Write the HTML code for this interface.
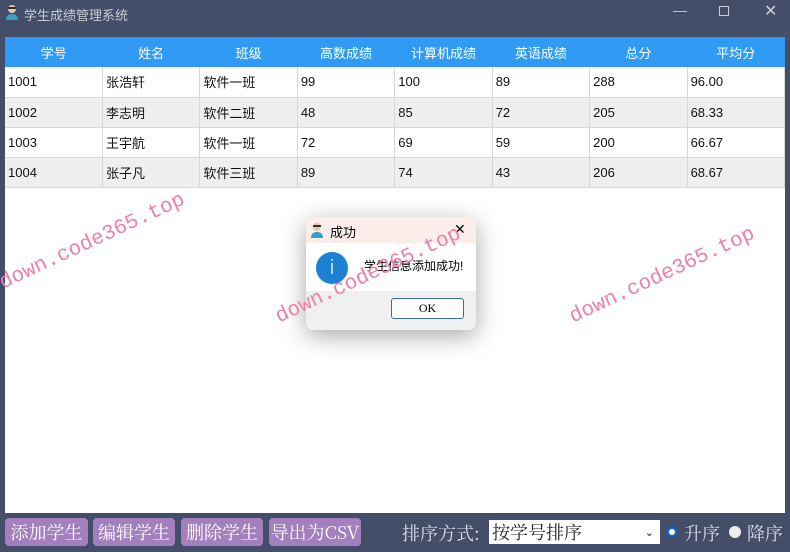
<!DOCTYPE html>
<html><head><meta charset="utf-8"><style>
*{margin:0;padding:0;box-sizing:border-box}
body{width:790px;height:552px;background:#444e68;font-family:"Liberation Sans","Noto Sans CJK SC",sans-serif;position:relative;overflow:hidden}
.title{position:absolute;left:24px;top:5px;color:#c9ccd6;font-size:13px}
.tb{position:absolute;top:2px;color:#c9ccd6;font-size:14px}
.area{position:absolute;left:5px;top:37px;width:780px;height:476px;background:#fff}
table{border-collapse:collapse;width:780px;table-layout:fixed}
th{background:#2f9bf5;color:#fff;font-weight:normal;font-size:13px;height:30px}
td{height:30px;font-size:13px;padding-left:3px;border-right:1px solid #d8d8d8;border-bottom:1px solid #d8d8d8;color:#111}
tr.g td{background:#efefef}
.btn{position:absolute;top:518px;height:28px;background:#a37fbd;color:#fff;border-radius:4px;font-family:"Noto Serif CJK SC",serif;font-size:18px;line-height:28px;text-align:center}
.wm{position:absolute;color:#ee7fa9;font-family:"Liberation Mono",monospace;font-size:21px;transform:rotate(-25deg);transform-origin:left bottom;white-space:nowrap}
.dlg{position:absolute;left:306px;top:217px;width:170px;height:113px;background:#fff;border-radius:7px;box-shadow:0 6px 24px rgba(0,0,0,.35);overflow:hidden}
</style></head><body>
<svg style="position:absolute;left:5px;top:4px" width="14" height="16"><circle cx="7" cy="5" r="4" fill="#e9c9a5"/><path d="M3 4h8" stroke="#333" stroke-width="2"/><path d="M1 16q0-6 6-6t6 6z" fill="#3aa0c8"/></svg>
<div class="title">学生成绩管理系统</div>
<div class="tb" style="left:673px">—</div>
<div class="tb" style="left:719px;top:6px;width:10px;height:10px;border:1px solid #c9ccd6"></div>
<div class="tb" style="left:764px;font-size:16px;top:1px">✕</div>
<div class="area">
<table>
<tr><th>学号</th><th>姓名</th><th>班级</th><th>高数成绩</th><th>计算机成绩</th><th>英语成绩</th><th>总分</th><th>平均分</th></tr>
<tr><td>1001</td><td>张浩轩</td><td>软件一班</td><td>99</td><td>100</td><td>89</td><td>288</td><td>96.00</td></tr>
<tr class="g"><td>1002</td><td>李志明</td><td>软件二班</td><td>48</td><td>85</td><td>72</td><td>205</td><td>68.33</td></tr>
<tr><td>1003</td><td>王宇航</td><td>软件一班</td><td>72</td><td>69</td><td>59</td><td>200</td><td>66.67</td></tr>
<tr class="g"><td>1004</td><td>张子凡</td><td>软件三班</td><td>89</td><td>74</td><td>43</td><td>206</td><td>68.67</td></tr>
</table>
</div>
<div class="dlg">
<div style="height:26px;background:#fbeeea;position:relative">
<svg style="position:absolute;left:4px;top:4px" width="14" height="17"><circle cx="7" cy="6" r="4" fill="#e9c9a5"/><path d="M3 5h8" stroke="#333" stroke-width="2"/><path d="M1 17q0-6 6-6t6 6z" fill="#3aa0c8"/></svg>
<span style="position:absolute;left:24px;top:5px;font-size:13px">成功</span>
<span style="position:absolute;left:148px;top:4px;font-size:14px">✕</span></div>
<div style="height:48px;position:relative"><div style="position:absolute;left:10px;top:9px;width:32px;height:32px;border-radius:50%;background:#1b82d3;color:#bfe6ff;text-align:center;line-height:32px;font-size:20px">i</div>
<span style="position:absolute;left:58px;top:14px;font-size:12px">学生信息添加成功!</span></div>
<div style="height:39px;background:#f0f0f0;position:relative"><div style="position:absolute;left:85px;top:7px;width:73px;height:21px;border:1px solid #3a6e9c;border-radius:3px;background:#fdfdfd;text-align:center;font-family:'Liberation Serif',serif;font-size:12px;line-height:19px">OK</div></div>
</div>
<div class="wm" style="left:6px;top:272px">down.code365.top</div>
<div class="wm" style="left:282px;top:306px">down.code365.top</div>
<div class="wm" style="left:576px;top:306px">down.code365.top</div>
<div class="btn" style="left:5px;width:83px">添加学生</div>
<div class="btn" style="left:93px;width:82px">编辑学生</div>
<div class="btn" style="left:181px;width:82px">删除学生</div>
<div class="btn" style="left:269px;width:92px">导出为CSV</div>
<div style="position:absolute;left:402px;top:520px;color:#dde;font-family:'Noto Serif CJK SC',serif;font-size:18px">排序方式:</div>
<div style="position:absolute;left:489px;top:520px;width:171px;height:24px;background:#fff;font-family:'Noto Serif CJK SC',serif;font-size:18px;line-height:24px;padding-left:3px;color:#222">按学号排序<span style="position:absolute;right:6px;top:0;font-size:11px">⌄</span></div>
<div style="position:absolute;left:666px;top:526px;width:12px;height:12px;border-radius:50%;background:#1b5fb0;border:3px solid #1b5fb0"><div style="width:6px;height:6px;background:#fff;border-radius:50%"></div></div>
<div style="position:absolute;left:684px;top:520px;color:#dde;font-family:'Noto Serif CJK SC',serif;font-size:18px">升序</div>
<div style="position:absolute;left:729px;top:526px;width:12px;height:12px;border-radius:50%;background:#eee"></div>
<div style="position:absolute;left:747px;top:520px;color:#dde;font-family:'Noto Serif CJK SC',serif;font-size:18px">降序</div>
</body></html>
